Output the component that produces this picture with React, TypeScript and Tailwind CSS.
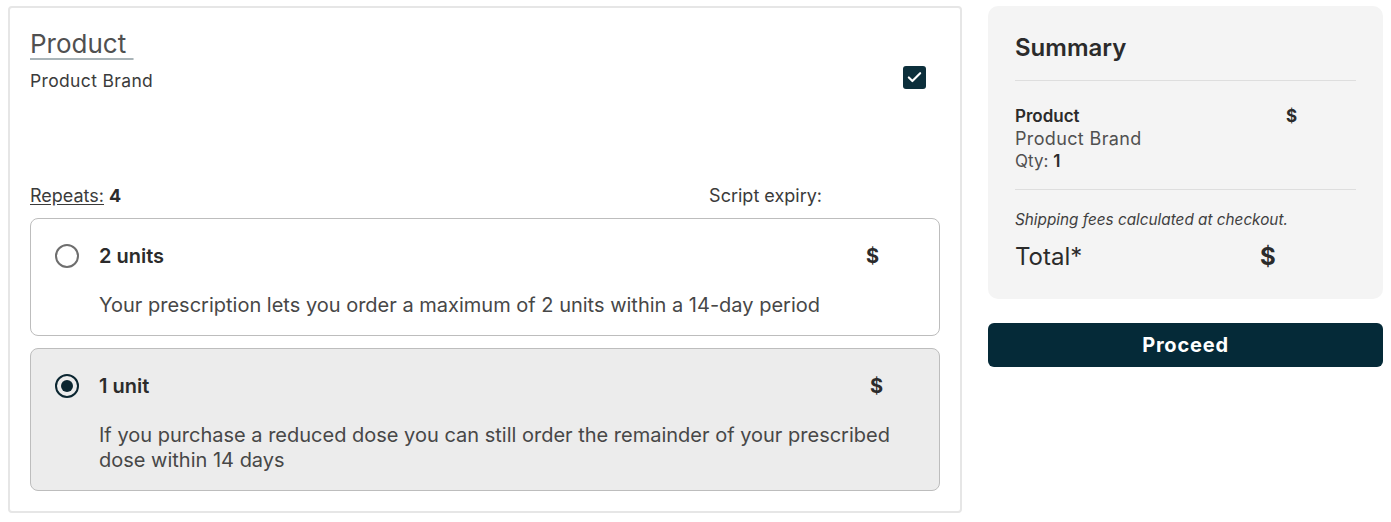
import { Check } from "lucide-react";

const font = { fontFamily: "Inter, 'Noto Sans', sans-serif" };

const Radio = ({ checked }: { checked: boolean }) =>
  checked ? (
    <span className="flex h-6 w-6 shrink-0 items-center justify-center rounded-full border-[2.5px] border-[#0b2631]">
      <span className="h-3 w-3 rounded-full bg-[#0b2631]" />
    </span>
  ) : (
    <span className="h-6 w-6 shrink-0 rounded-full border-[2.5px] border-[#6e6e6e]" />
  );

const Option = ({
  checked,
  title,
  text,
  priceGap,
}: {
  checked: boolean;
  title: string;
  text: string;
  priceGap: string;
}) => (
  <div
    className={`rounded-lg border border-[#bdbdbd] pl-6 pr-10 pt-[25px] pb-[17px] ${
      checked ? "bg-[#ececec]" : "bg-white"
    }`}
  >
    <div className="flex items-center gap-5">
      <Radio checked={checked} />
      <span className="flex-1 text-[20px] leading-6 font-semibold text-[#2b2b2b]">{title}</span>
      <span className={`text-[20px] leading-6 font-bold text-[#2b2b2b] ${priceGap}`}>$</span>
    </div>
    <p className="mt-[25px] ml-11 text-[20px] leading-[25px] text-[#474747]">{text}</p>
  </div>
);

export default function App() {
  return (
    <div style={font} className="flex gap-[26px] bg-white px-2 pt-[6px]">
      {/* product card */}
      <div className="w-[954px] shrink-0 rounded border-2 border-[#e6e6e6] px-[20px] pt-5 pb-5">
        <div className="flex justify-between">
          <div>
            <h2 className="text-[26px] leading-8 text-[#505050] underline decoration-[#a9b4b8] decoration-[1.5px] underline-offset-[5px]">
              Product&nbsp;
            </h2>
            <p className="mt-[9px] text-[17.5px] leading-6 tracking-[0.02em] text-[#3b3b3b]">
              Product Brand
            </p>
          </div>
          <span className="mt-[38px] mr-[14px] flex h-[23px] w-[23px] items-center justify-center rounded-[3px] bg-[#0c2f3b]">
            <Check className="h-[17px] w-[17px] text-white" strokeWidth={3} />
          </span>
        </div>

        <div className="mt-[91px] flex justify-between pr-[118px] text-[18px] leading-6 text-[#3b3b3b]">
          <span>
            <span className="underline underline-offset-2">Repeats:</span>{" "}
            <span className="font-bold text-[#2b2b2b]">4</span>
          </span>
          <span>Script expiry:</span>
        </div>

        <div className="mt-[10px] flex flex-col gap-3">
          <Option
            checked={false}
            title="2 units"
            priceGap="mr-5"
            text="Your prescription lets you order a maximum of 2 units within a 14-day period"
          />
          <Option
            checked
            title="1 unit"
            priceGap="mr-4"
            text="If you purchase a reduced dose you can still order the remainder of your prescribed dose within 14 days"
          />
        </div>
      </div>

      {/* summary */}
      <div className="w-[395px] shrink-0">
        <div className="rounded-[10px] bg-[#f4f4f4] px-[27px] pt-6 pb-[26px]">
          <h3 className="text-[24px] leading-9 font-semibold text-[#2b2b2b]">Summary</h3>
          <div className="mt-[14px] border-t border-[#dedede] pt-6 pb-4">
            <div className="grid grid-cols-[271px_1fr] text-[17px] leading-[22.5px]">
              <div>
                <div className="font-semibold text-[#2b2b2b]">Product</div>
                <div className="text-[18px] tracking-[0.02em] text-[#505050]">Product Brand</div>
                <div className="text-[#505050]">
                  Qty: <span className="font-semibold text-[#2b2b2b]">1</span>
                </div>
              </div>
              <div className="font-bold text-[#2b2b2b]">$</div>
            </div>
          </div>
          <div className="border-t border-[#dedede] pt-5">
            <p className="text-[15.3px] leading-5 italic text-[#3f3f3f]">
              Shipping fees calculated at checkout.
            </p>
            <div className="mt-[11px] grid grid-cols-[245px_1fr] text-[24px] leading-8 text-[#2b2b2b]">
              <span>Total*</span>
              <span className="font-bold">$</span>
            </div>
          </div>
        </div>
        <button className="mt-6 flex h-11 w-full items-center justify-center rounded-md bg-[#052a38] text-[20px] font-bold tracking-[0.04em] text-white">
          Proceed
        </button>
      </div>
    </div>
  );
}
